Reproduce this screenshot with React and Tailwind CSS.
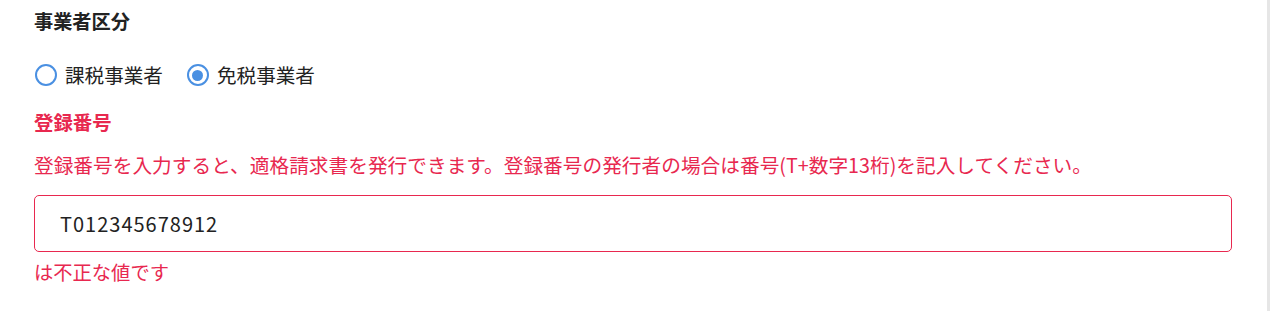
import React, { useState } from 'react';

const font = { fontFamily: '"Noto Sans CJK JP", "Noto Sans", sans-serif' };

function Radio({ checked, label, onChange }) {
  return (
    <label className="flex items-center gap-[8px] cursor-pointer" onClick={onChange}>
      <span className="flex h-[22px] w-[22px] items-center justify-center rounded-full border-2 border-[#4a90e2] bg-white">
        {checked && <span className="h-[11px] w-[11px] rounded-full bg-[#4a90e2]" />}
      </span>
      <span className="text-[19.6px] leading-[24px] text-[#222]">{label}</span>
    </label>
  );
}

export default function App() {
  const [kind, setKind] = useState('exempt');

  return (
    <div className="flex h-[311px] w-full bg-white" style={font}>
      <div className="flex-1 pl-[34px] pr-[35px] pt-[8px]">
        <h2 className="h-[27px] text-[19.2px] font-bold leading-[27px] text-[#222]">事業者区分</h2>

        <div className="mt-[28px] flex h-[24px] items-center gap-[24px] pl-[1px]">
          <Radio checked={kind === 'taxable'} label="課税事業者" onChange={() => setKind('taxable')} />
          <Radio checked={kind === 'exempt'} label="免税事業者" onChange={() => setKind('exempt')} />
        </div>

        <div className="mt-[21px] h-[27px] text-[19.4px] font-bold leading-[27px] text-[#e8284f]">登録番号</div>

        <p className="mt-[16px] h-[28px] text-[19.7px] leading-[28px] text-[#e8284f]">
          登録番号を入力すると、適格請求書を発行できます。登録番号の発行者の場合は番号(T+数字13桁)を記入してください。
        </p>

        <input
          type="text"
          defaultValue="T012345678912"
          className="mt-[16px] block h-[57px] w-full rounded-[5px] border border-[#e8284f] pl-[25px] text-[20px] tracking-[1px] text-[#222] outline-none"
          style={font}
        />

        <div className="mt-[6px] h-[28px] text-[19.3px] leading-[28px] text-[#e8284f]">は不正な値です</div>
      </div>
      <div className="w-[3px] bg-[#e6e6e6]" />
    </div>
  );
}
